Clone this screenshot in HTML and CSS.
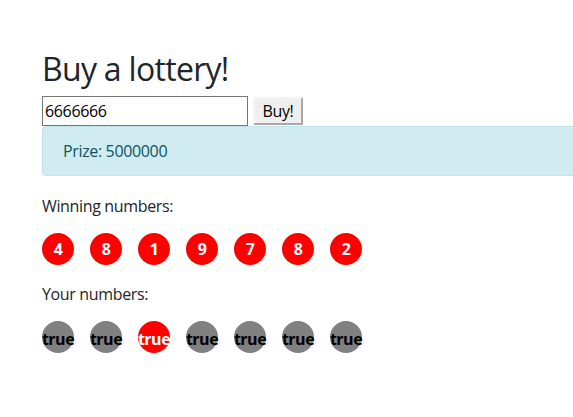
FILE: index.html
```html
<!DOCTYPE html>
<html>
<head>
<meta charset="utf-8">
<link rel="stylesheet" href="styles.css">
</head>
<body>
<div class="page">
  <h1 class="title">Buy a lottery!</h1>
  <div class="buy-row">
    <input class="ticket-input" type="text" value="6666666">
    <button class="buy-btn">Buy!</button>
  </div>
  <div class="alert">Prize: 5000000</div>
  <p class="label">Winning numbers:</p>
  <div class="balls">
    <span class="ball red">4</span>
    <span class="ball red">8</span>
    <span class="ball red">1</span>
    <span class="ball red">9</span>
    <span class="ball red">7</span>
    <span class="ball red">8</span>
    <span class="ball red">2</span>
  </div>
  <p class="label">Your numbers:</p>
  <div class="balls">
    <span class="ball gray word">true</span>
    <span class="ball gray word">true</span>
    <span class="ball red word">true</span>
    <span class="ball gray word">true</span>
    <span class="ball gray word">true</span>
    <span class="ball gray word">true</span>
    <span class="ball gray word">true</span>
  </div>
</div>
</body>
</html>
```

FILE: styles.css
```css
html {
  overflow: hidden;
}
body {
  margin: 0;
  font-family: "Open Sans", "Noto Sans", sans-serif;
  font-size: 16px;
  line-height: 1.5;
  color: #212529;
  background: #fff;
  letter-spacing: -0.35px;
}
.page {
  padding: 50px 0 0 42px;
  overflow: hidden;
}
.title {
  margin: 0 0 8px;
  font-size: 32px;
  font-weight: 400;
  line-height: 1.2;
  letter-spacing: -0.7px;
}
.buy-row {
  display: flex;
  align-items: center;
  gap: 5px;
  height: 30px;
}
.ticket-input {
  box-sizing: border-box;
  width: 206px;
  height: 30px;
  margin: 0;
  padding: 0 2px;
  border: 1px solid #767676;
  font-family: inherit;
  font-size: 16px;
  letter-spacing: -0.35px;
  color: #000;
}
.buy-btn {
  box-sizing: border-box;
  width: 50px;
  height: 28px;
  margin: 0;
  padding: 0;
  background: #efefef;
  border: 2px solid;
  border-color: #f4f4f4 #a9a9a9 #a9a9a9 #f4f4f4;
  font-family: inherit;
  font-size: 16px;
  letter-spacing: -0.35px;
  color: #000;
}
.alert {
  box-sizing: border-box;
  padding: 12px 20px;
  margin: 0 -20px 16px 0;
  background: #d1ecf1;
  border: 1px solid #bee5eb;
  border-radius: 4px;
  color: #0c5460;
}
.label {
  margin: 0 0 15px;
  padding-top: 2px;
}
.balls {
  display: flex;
  gap: 16px;
  margin-bottom: 15px;
}
.ball {
  box-sizing: border-box;
  width: 32px;
  height: 32px;
  border-radius: 50%;
  display: flex;
  align-items: center;
  justify-content: center;
  font-weight: 700;
  font-size: 16px;
  line-height: 32px;
  white-space: nowrap;
  letter-spacing: -0.5px;
}
.word {
  padding-top: 3px;
}
.red {
  background: #ff0000;
  color: #fff;
}
.gray {
  background: #808080;
  color: #000;
}
```
